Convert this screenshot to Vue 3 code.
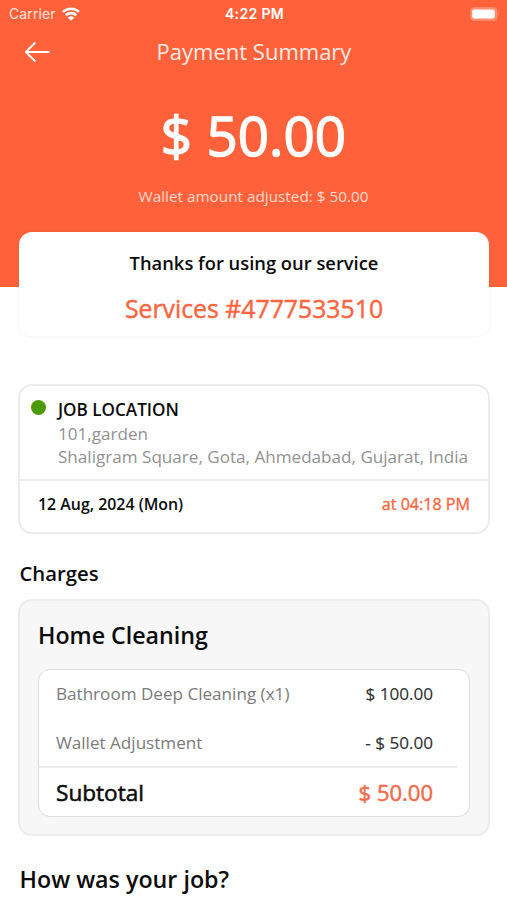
<script setup>
const charges = [
  { label: 'Bathroom Deep Cleaning (x1)', amount: '$ 100.00' },
  { label: 'Wallet Adjustment', amount: '- $ 50.00' },
]
</script>

<template>
  <main class="screen">
    <header class="hero">
      <div class="status">
        <div class="carrier">
          <span>Carrier</span>
          <svg class="wifi" viewBox="0 0 18 14" aria-hidden="true">
            <g fill="none" stroke="#fff" stroke-width="2.6">
              <path d="M1 4.9a11.6 11.6 0 0 1 16 0" />
              <path d="M3.9 8.2a7.3 7.3 0 0 1 10.2 0" />
            </g>
            <path d="M9 13.7 5.9 10.7a4.5 4.5 0 0 1 6.2 0Z" fill="#fff" />
          </svg>
        </div>
        <span class="clock">4:22 PM</span>
        <svg class="battery" viewBox="0 0 30 14" aria-hidden="true">
          <rect x=".8" y=".8" width="26" height="12.4" rx="3.5" fill="#ff8a6b" stroke="#ff9274" stroke-width="1.3" />
          <rect x="2.2" y="2.4" width="22.6" height="9" rx="2" fill="#fff" />
          <path d="M28 4.7q1.7 2.3 0 4.6Z" fill="#ff9274" />
        </svg>
      </div>
      <nav class="nav">
        <svg class="back" viewBox="0 0 26 20" aria-hidden="true">
          <path d="M24.8 10H2M10.8 1 1.8 10l9 9" fill="none" stroke="#fff" stroke-width="1.8" stroke-linecap="round" stroke-linejoin="round" />
        </svg>
        <h1>Payment Summary</h1>
      </nav>
      <p class="total">$ 50.00</p>
      <p class="adjusted">Wallet amount adjusted: $ 50.00</p>
    </header>

    <section class="thanks">
      <p class="message">Thanks for using our service</p>
      <p class="number">Services #4777533510</p>
    </section>

    <section class="job">
      <div class="place">
        <i class="dot"></i>
        <div class="address">
          <h2>JOB LOCATION</h2>
          <p>101,garden</p>
          <p class="street">Shaligram Square, Gota, Ahmedabad, Gujarat, India</p>
        </div>
      </div>
      <div class="time">
        <span class="date">12 Aug, 2024 (Mon)</span>
        <span class="hour">at 04:18 PM</span>
      </div>
    </section>

    <h2 class="heading">Charges</h2>
    <section class="charges">
      <h3>Home Cleaning</h3>
      <div class="bill">
        <div v-for="c in charges" :key="c.label" class="row">
          <span class="label">{{ c.label }}</span>
          <span class="amount">{{ c.amount }}</span>
        </div>
        <div class="rule"></div>
        <div class="row subtotal">
          <span class="sublabel">Subtotal</span>
          <span class="subamount">$ 50.00</span>
        </div>
      </div>
    </section>
    <h2 class="question">How was your job?</h2>
  </main>
</template>

<style>
body { margin: 0; background: #fff; }
</style>

<style scoped>
* { box-sizing: border-box; }
h1, h2, h3, p { margin: 0; font-weight: 400; }
svg { display: block; }
.screen {
  height: 900px;
  overflow: hidden;
  background: #fff;
  color: #0c0c0c;
  font-family: "Open Sans", sans-serif;
  white-space: nowrap;
}
.hero { height: 287px; background: #ff623a; color: #fff; text-align: center; }
.status {
  display: grid;
  grid-template-columns: 1fr auto 1fr;
  align-items: center;
  height: 27px;
  padding: 0 7px 0 9px;
  font-family: Inter, sans-serif;
}
.carrier { display: flex; align-items: center; gap: 6px; font-size: 14px; letter-spacing: .12px; color: #ffe5dd; }
.wifi { width: 18px; height: 14px; }
.clock { font-size: 14px; letter-spacing: .35px; font-weight: 600; }
.battery { width: 30px; height: 14px; justify-self: end; }
.nav {
  display: grid;
  grid-template-columns: 26px 1fr 26px;
  align-items: center;
  height: 50px;
  padding: 0 24px;
}
.back { width: 26px; height: 20px; }
h1 { margin-top: -2px; padding-left: 1px; font-size: 22px; line-height: 30px; color: #ffeae4; }
.total { margin-top: 18px; font-size: 54.8px; line-height: 80px; -webkit-text-stroke: 1.4px #fff; }
.adjusted { margin-top: 10px; font-size: 15.3px; line-height: 22px; color: #ffd8cc; }
.thanks {
  height: 104px;
  margin: -55px 18px 0 19px;
  padding-top: 18px;
  border-radius: 13px;
  background: #fff;
  box-shadow: 0 0 0 2px rgba(0, 0, 0, .02);
  text-align: center;
}
.message { font-size: 18.35px; line-height: 26px; font-weight: 600; }
.number { margin-top: 15px; font-size: 24.8px; line-height: 34px; color: #fb6540; -webkit-text-stroke: .45px #fb6540; }
.job { height: 150px; margin: 48px 17px 0 18px; border: 2px solid #ececec; border-radius: 14px; }
.place { display: flex; gap: 12px; height: 95px; padding: 12px 0 0 11px; border-bottom: 2px solid #ececec; }
.dot { flex: none; width: 15px; height: 15px; margin-top: 2px; border-radius: 50%; background: #4b9903; }
.address { font-size: 17.1px; line-height: 23.5px; color: #929292; }
.address h2 { font-size: 17.1px; font-weight: 600; color: #0c0c0c; }
.time { display: flex; justify-content: space-between; padding: 10px 18px 0 18px; font-size: 15.9px; line-height: 26px; }
.date { font-weight: 600; }
.hour { font-size: 16.1px; color: #fb6540; -webkit-text-stroke: .35px #fb6540; }
.heading { margin: 25px 19.5px 0; font-size: 20.3px; line-height: 28px; font-weight: 600; }
.charges { height: 237px; margin: 12px 17px 0 18px; padding: 18px 18px 0 18px; border: 1.5px solid #e9e9e9; border-width: 2px; border-color: #ececec; border-radius: 14px; background: #f7f7f7; }
h3 { font-size: 23.2px; line-height: 32px; font-weight: 600; }
.bill { height: 148px; margin-top: 18px; border: 1px solid #dedede; border-radius: 12px; background: #fff; }
.row { display: flex; align-items: center; justify-content: space-between; height: 48px; padding: 0 36px 0 17px; font-size: 17.1px; }
.row:first-child { padding-bottom: 2px; }
.label { color: #7b7b7b; }
.amount { color: #333; -webkit-text-stroke: .15px #333; }
.rule { height: 2px; margin-right: 12px; background: #ececec; }
.row.subtotal { font-size: 22.6px; -webkit-text-stroke: .55px currentColor; }
.subamount { font-size: 22px; color: #f16c4b; -webkit-text-stroke: .5px #f16c4b; }
.question { margin: 26px 19.5px 0; font-size: 23.25px; line-height: 34px; font-weight: 600; }
</style>
